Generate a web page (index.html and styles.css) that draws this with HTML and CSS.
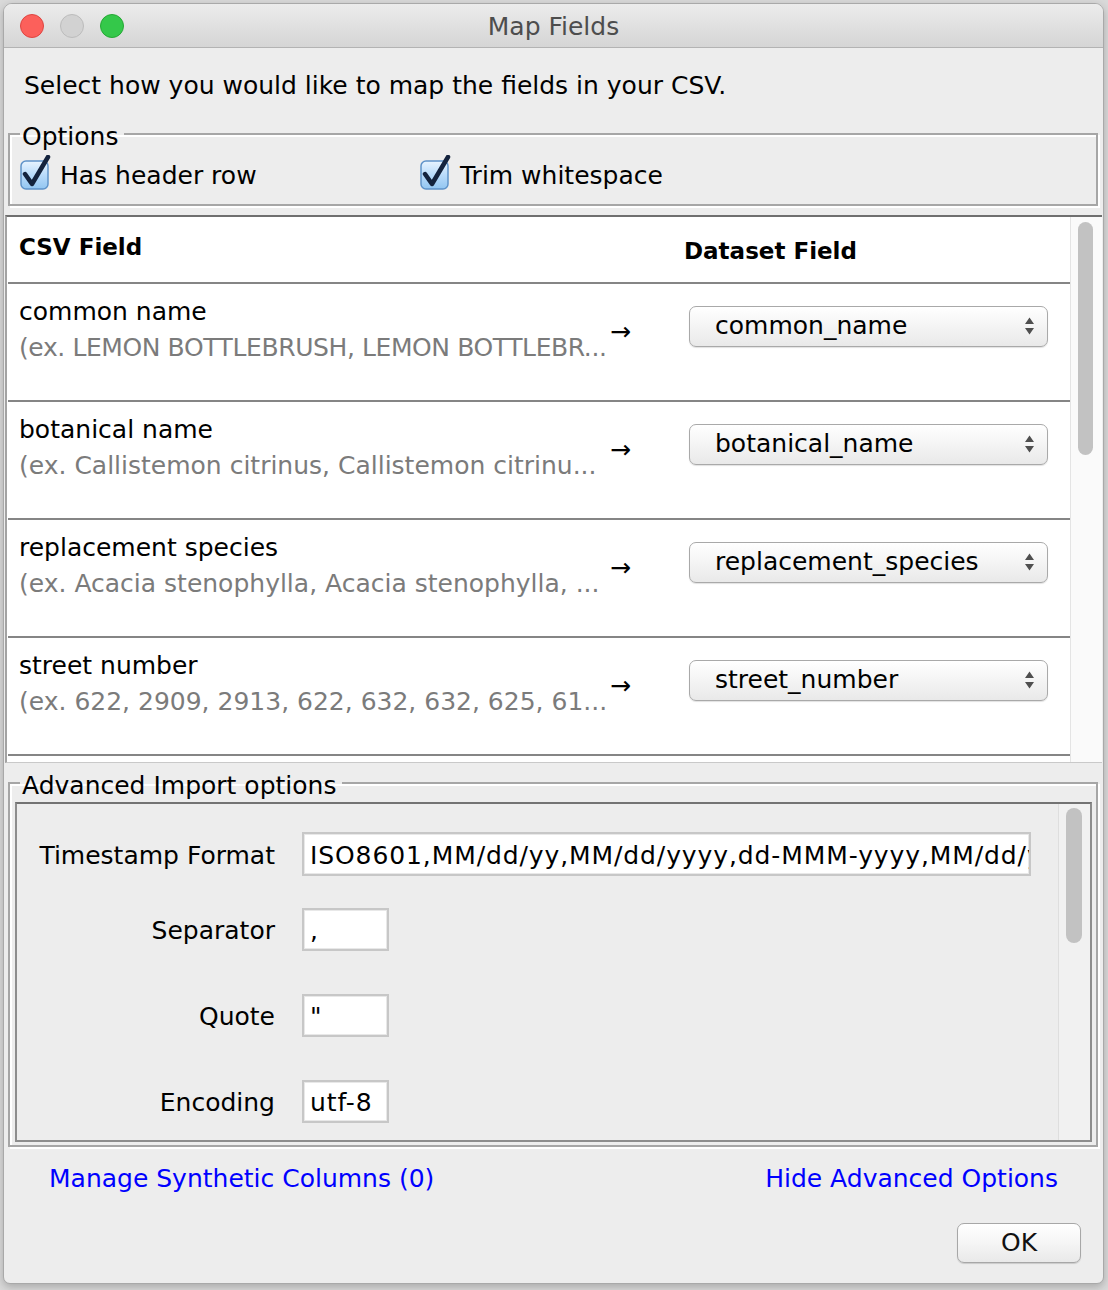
FILE: index.html
```html
<!DOCTYPE html>
<html lang="en">
<head>
<meta charset="utf-8">
<title>Map Fields</title>
<link rel="stylesheet" href="styles.css">
</head>
<body>
<div class="desk">
  <div class="window">
    <div class="titlebar">
      <div class="lights">
        <span class="light red"></span>
        <span class="light min"></span>
        <span class="light max"></span>
      </div>
      <div class="title">Map Fields</div>
      <div></div>
    </div>

    <div class="content">
      <p class="intro">Select how you would like to map the fields in your CSV.</p>

      <fieldset class="group options">
        <legend>Options</legend>
        <div class="checks">
          <label class="check">
            <svg class="cb" width="34" height="36" viewBox="0 0 34 36"><defs><linearGradient id="cbg1" x1="0" y1="0" x2="0" y2="1"><stop offset="0" stop-color="#e8f4ff"/><stop offset="0.5" stop-color="#b9dbfa"/><stop offset="1" stop-color="#92c6f1"/></linearGradient></defs><rect x="1" y="6" width="27" height="28" rx="5" fill="url(#cbg1)" stroke="#5f93c9" stroke-width="1.5"/><path d="M5 19 L12 29 L28 2" fill="none" stroke="#14233d" stroke-width="4.5" stroke-linecap="round" stroke-linejoin="round"/></svg>
            <span>Has header row</span>
          </label>
          <label class="check">
            <svg class="cb" width="34" height="36" viewBox="0 0 34 36"><defs><linearGradient id="cbg2" x1="0" y1="0" x2="0" y2="1"><stop offset="0" stop-color="#e8f4ff"/><stop offset="0.5" stop-color="#b9dbfa"/><stop offset="1" stop-color="#92c6f1"/></linearGradient></defs><rect x="1" y="6" width="27" height="28" rx="5" fill="url(#cbg2)" stroke="#5f93c9" stroke-width="1.5"/><path d="M5 19 L12 29 L28 2" fill="none" stroke="#14233d" stroke-width="4.5" stroke-linecap="round" stroke-linejoin="round"/></svg>
            <span>Trim whitespace</span>
          </label>
        </div>
      </fieldset>

      <div class="mapping">
        <div class="map-list">
          <div class="map-head">
            <div class="h-csv">CSV Field</div>
            <div></div>
            <div class="h-ds">Dataset Field</div>
          </div>

          <div class="map-row">
            <div class="csv">
              <div class="name">common name</div>
              <div class="ex caps">(ex. LEMON BOTTLEBRUSH, LEMON BOTTLEBR...</div>
            </div>
            <div class="arrow">→</div>
            <div class="combo"><span>common_name</span><svg width="11" height="20" viewBox="0 0 11 20"><path d="M5.5 1.5 L10 8 H1 Z M5.5 18.5 L10 12 H1 Z" fill="#4f4f4f"/></svg></div>
          </div>

          <div class="map-row">
            <div class="csv">
              <div class="name">botanical name</div>
              <div class="ex">(ex. Callistemon citrinus, Callistemon citrinu...</div>
            </div>
            <div class="arrow">→</div>
            <div class="combo"><span>botanical_name</span><svg width="11" height="20" viewBox="0 0 11 20"><path d="M5.5 1.5 L10 8 H1 Z M5.5 18.5 L10 12 H1 Z" fill="#4f4f4f"/></svg></div>
          </div>

          <div class="map-row">
            <div class="csv">
              <div class="name">replacement species</div>
              <div class="ex">(ex. Acacia stenophylla, Acacia stenophylla, ...</div>
            </div>
            <div class="arrow">→</div>
            <div class="combo"><span>replacement_species</span><svg width="11" height="20" viewBox="0 0 11 20"><path d="M5.5 1.5 L10 8 H1 Z M5.5 18.5 L10 12 H1 Z" fill="#4f4f4f"/></svg></div>
          </div>

          <div class="map-row">
            <div class="csv">
              <div class="name">street number</div>
              <div class="ex">(ex. 622, 2909, 2913, 622, 632, 632, 625, 61...</div>
            </div>
            <div class="arrow">→</div>
            <div class="combo"><span>street_number</span><svg width="11" height="20" viewBox="0 0 11 20"><path d="M5.5 1.5 L10 8 H1 Z M5.5 18.5 L10 12 H1 Z" fill="#4f4f4f"/></svg></div>
          </div>
        </div>
        <div class="vscroll"><div class="thumb map-thumb"></div></div>
      </div>

      <fieldset class="group advanced">
        <legend>Advanced Import options</legend>
        <div class="adv-pane">
          <div class="form">
            <div class="frow ts">
              <label class="flabel">Timestamp Format</label>
              <div class="tf wide">ISO8601,MM/dd/yy,MM/dd/yyyy,dd-MMM-yyyy,MM/dd/yyyy HH:mm</div>
            </div>
            <div class="frow">
              <label class="flabel">Separator</label>
              <div class="tf short">,</div>
            </div>
            <div class="frow">
              <label class="flabel">Quote</label>
              <div class="tf short">"</div>
            </div>
            <div class="frow">
              <label class="flabel">Encoding</label>
              <div class="tf short">utf-8</div>
            </div>
          </div>
          <div class="vscroll small"><div class="thumb adv-thumb"></div></div>
        </div>
      </fieldset>

      <div class="links">
        <a class="link">Manage Synthetic Columns (0)</a>
        <a class="link">Hide Advanced Options</a>
      </div>

      <div class="actions">
        <button class="ok" type="button">OK</button>
      </div>
    </div>
  </div>
</div>
</body>
</html>
```

FILE: styles.css
```css
* { box-sizing: border-box; }

html, body {
  margin: 0;
  padding: 0;
}

body {
  width: 1108px;
  height: 1290px;
  overflow: hidden;
  background: #d9d9d9;
  font-family: "DejaVu Sans", "Liberation Sans", sans-serif;
  font-size: 25px;
  color: #000;
}

.desk {
  padding: 3px 4px 0 3px;
}

.window {
  width: 1101px;
  height: 1281px;
  background: #ededed;
  border: 1px solid #a9a9a9;
  border-radius: 9px 9px 7px 7px;
  overflow: hidden;
  box-shadow: 0 3px 8px rgba(0, 0, 0, 0.22);
  display: flex;
  flex-direction: column;
}

/* ---------- title bar ---------- */
.titlebar {
  flex: none;
  height: 44px;
  background: linear-gradient(#ececec, #d5d5d5);
  border-bottom: 1px solid #b3b3b3;
  display: grid;
  grid-template-columns: 1fr auto 1fr;
  align-items: center;
}

.lights {
  display: flex;
  gap: 16px;
  padding-left: 16px;
  padding-top: 1px;
}

.light {
  width: 24px;
  height: 24px;
  border-radius: 50%;
}

.red { background: #fc605b; border: 1px solid #de4541; }
.min { background: #d2d2d2; border: 1px solid #bcbcbc; }
.max { background: #34c84a; border: 1px solid #25a834; }

.title {
  color: #4d4d4d;
  line-height: 30px;
  padding-top: 3px;
}

/* ---------- content ---------- */
.content {
  flex: 1;
  display: flex;
  flex-direction: column;
  min-height: 0;
}

.intro {
  margin: 23px 0 0 20px;
  line-height: 30px;
}

.group {
  min-width: 0;
  margin: 0 5px 0 4px;
  border: 2px solid #a6a6a6;
  box-shadow: inset 2px 2px 0 #ffffff, 2px 2px 0 #ffffff;
}

.group legend {
  line-height: 30px;
  padding: 6px 6px 0 2px;
}

.options {
  margin-top: 15px;
  padding: 9px 10px 13px 10px;
}

.checks {
  display: grid;
  grid-template-columns: 400px auto;
  line-height: 30px;
}

.check {
  display: flex;
  align-items: center;
  height: 30px;
}

.cb {
  margin: -6px 6px 0 0;
  flex: none;
}

/* ---------- mapping table ---------- */
.mapping {
  flex: none;
  margin: 9px 1px 0 1px;
  height: 548px;
  display: flex;
  background: #ffffff;
  border-top: 2px solid #6f6f6f;
  border-left: 2px solid #a3a3a3;
  border-bottom: 1px solid #c9c9c9;
}

.map-list {
  flex: 1;
  min-width: 0;
  overflow: hidden;
  background: #ffffff;
}

.map-head,
.map-row {
  display: grid;
  grid-template-columns: 591px 79px 359px;
  padding-left: 11px;
  border-bottom: 2px solid #858585;
  margin-left: 1px;
}

.map-head {
  height: 67px;
  padding-top: 15px;
  font-weight: bold;
  font-size: 23px;
  line-height: 30px;
}

.h-ds {
  margin-top: 4px;
  margin-left: -5px;
}

.map-row {
  height: 118px;
  padding-top: 10px;
}

.csv {
  white-space: nowrap;
  line-height: 36px;
}

.ex {
  color: #7b7b7b;
}

.ex.caps {
  letter-spacing: -0.4px;
}

.arrow {
  margin-top: 20px;
  line-height: 36px;
  align-self: start;
}

.combo {
  align-self: start;
  margin-top: 12px;
  height: 41px;
  border: 1px solid #a9a9a9;
  border-radius: 7px;
  background: linear-gradient(#ffffff, #f4f4f4 50%, #e9e9e9);
  box-shadow: 0 1px 1px rgba(0, 0, 0, 0.12);
  display: flex;
  align-items: center;
  justify-content: space-between;
  padding: 0 12px 0 25px;
  line-height: 30px;
  white-space: nowrap;
}

.combo span {
  margin-top: -2px;
}

.combo svg {
  flex: none;
  margin-top: -1px;
}

.vscroll {
  flex: none;
  width: 32px;
  background: #fafafa;
  border-left: 1px solid #e4e4e4;
  padding-left: 7px;
}

.thumb {
  width: 15px;
  background: #c2c2c2;
  border-radius: 8px;
}

.map-thumb {
  margin-top: 5px;
  height: 233px;
}

/* ---------- advanced ---------- */
.advanced {
  margin-top: 2px;
  padding: 1px 4px 3px 5px;
}

.advanced legend {
  margin-left: 5px;
}

.adv-pane {
  height: 340px;
  display: flex;
  border: 2px solid #8d8d8d;
  border-top-color: #737373;
}

.form {
  flex: 1;
  display: flex;
  flex-direction: column;
  padding-top: 28px;
  min-width: 0;
}

.frow {
  display: grid;
  grid-template-columns: 258px auto;
  column-gap: 27px;
  align-items: center;
  margin-bottom: 43px;
}

.frow.ts {
  margin-bottom: 32px;
}

.flabel {
  text-align: right;
  line-height: 30px;
  padding-top: 3px;
}

.tf {
  height: 43px;
  background: #ffffff;
  border: 2px solid #c7c7c7;
  box-shadow: inset 0 0 0 1px #e8e8e8;
  padding: 2px 5px 0 6px;
  line-height: 38px;
  white-space: nowrap;
  overflow: hidden;
  letter-spacing: 0.9px;
}

.tf.wide {
  width: 729px;
  height: 44px;
  line-height: 40px;
}

.tf.short {
  width: 87px;
}

.vscroll.small {
  width: 32px;
  background: #f1f1f1;
  border-left: 1px solid #dedede;
  padding-left: 7px;
}

.adv-thumb {
  margin-top: 4px;
  height: 135px;
  width: 16px;
}

/* ---------- footer ---------- */
.links {
  display: flex;
  justify-content: space-between;
  margin-top: 17px;
  padding: 0 45px;
  line-height: 30px;
}

.link {
  color: #0000ff;
  cursor: pointer;
}

.actions {
  display: flex;
  justify-content: flex-end;
  margin-top: 29px;
  padding-right: 22px;
}

.ok {
  width: 124px;
  height: 40px;
  font-family: inherit;
  font-size: 25px;
  color: #111;
  border: 1px solid #a7a7a7;
  border-radius: 7px;
  background: linear-gradient(#ffffff, #f5f5f5 50%, #e9e9e9);
  box-shadow: 0 1px 1px rgba(0, 0, 0, 0.15);
  padding: 0;
  line-height: 38px;
}
```
